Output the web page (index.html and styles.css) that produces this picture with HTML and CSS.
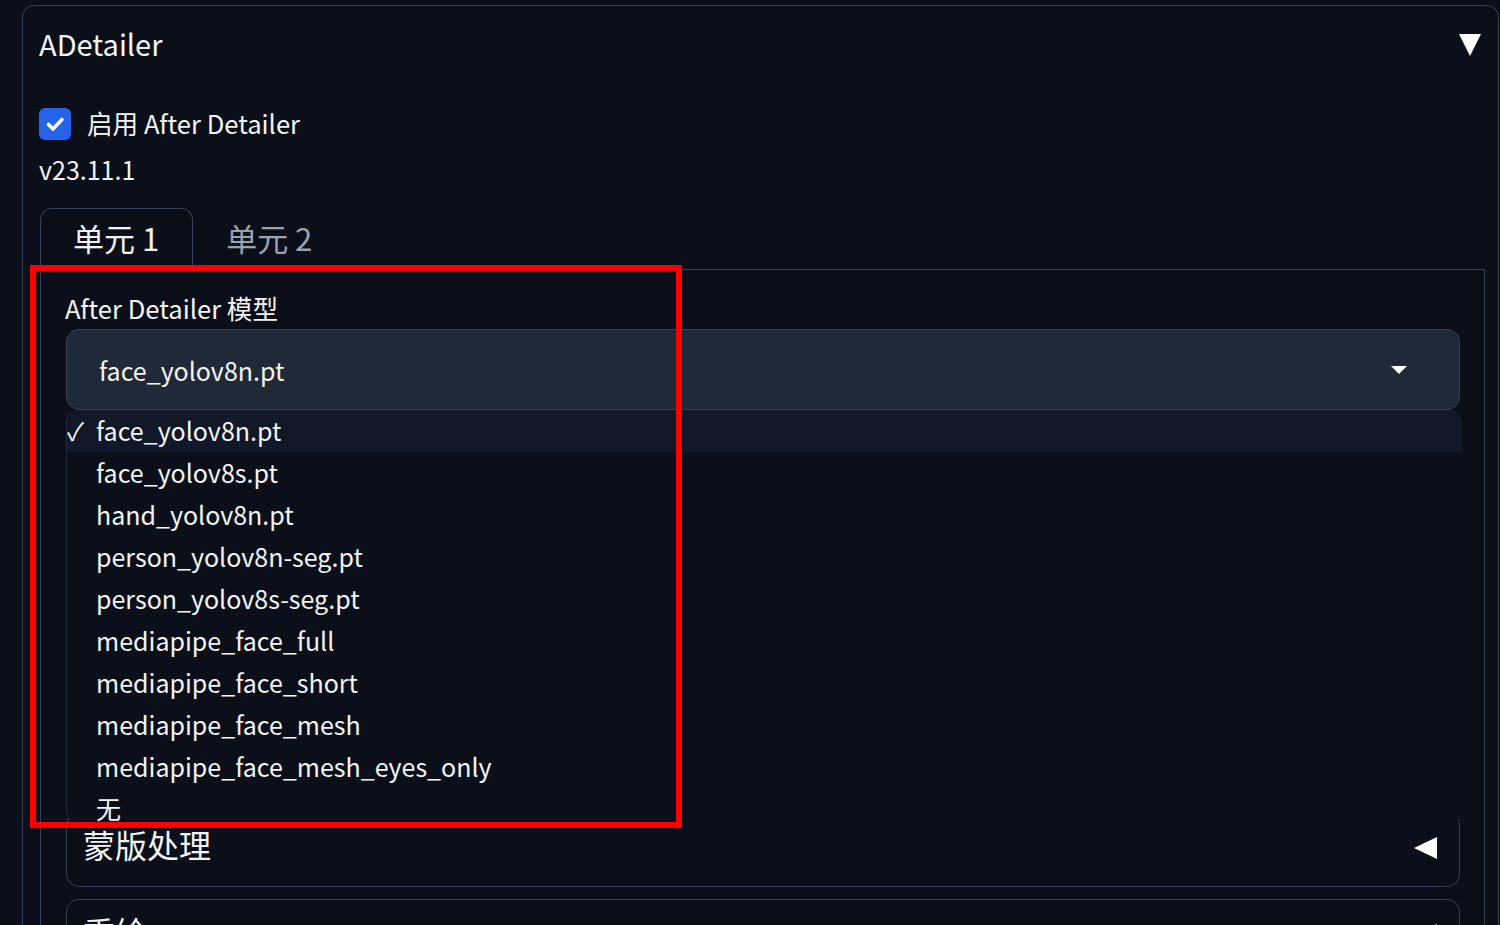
FILE: index.html
```html
<!DOCTYPE html>
<html lang="zh">
<head>
<meta charset="utf-8">
<title>ADetailer</title>
<link rel="stylesheet" href="styles.css">
</head>
<body>
<div class="panel">
  <div class="header">
    <span class="title">ADetailer</span>
    <svg class="tri-down" width="22" height="22" viewBox="0 0 22 22"><polygon points="0,0 22,0 11,22" fill="#ffffff"/></svg>
  </div>
  <label class="check-row">
    <span class="checkbox"><svg width="32" height="32" viewBox="0 0 32 32"><path d="M9.5 16.5 L14 21 L23 11.5" fill="none" stroke="#fff" stroke-width="3.6" stroke-linecap="round" stroke-linejoin="round"/></svg></span>
    <span class="check-label">启用 After Detailer</span>
  </label>
  <div class="version">v23.11.1</div>
  <div class="tabs">
    <div class="tab-nav">
      <div class="tab active">单元 1</div>
      <div class="tab">单元 2</div>
    </div>
    <div class="tab-panel">
      <div class="field-label">After Detailer 模型</div>
      <div class="dropdown">
        <div class="dropdown-input">
          <span class="dropdown-value">face_yolov8n.pt</span>
          <svg class="caret" width="16" height="8" viewBox="0 0 16 8"><polygon points="0,0 16,0 8,8" fill="#ffffff"/></svg>
        </div>
        <ul class="menu">
          <li class="item selected"><span class="tick">✓</span>face_yolov8n.pt</li>
          <li class="item"><span class="tick"></span>face_yolov8s.pt</li>
          <li class="item"><span class="tick"></span>hand_yolov8n.pt</li>
          <li class="item"><span class="tick"></span>person_yolov8n-seg.pt</li>
          <li class="item"><span class="tick"></span>person_yolov8s-seg.pt</li>
          <li class="item"><span class="tick"></span>mediapipe_face_full</li>
          <li class="item"><span class="tick"></span>mediapipe_face_short</li>
          <li class="item"><span class="tick"></span>mediapipe_face_mesh</li>
          <li class="item"><span class="tick"></span>mediapipe_face_mesh_eyes_only</li>
          <li class="item"><span class="tick"></span>无</li>
        </ul>
      </div>
      <div class="hidden-area">
        <div class="textbox"></div>
        <div class="textbox"></div>
        <div class="accordion-closed"></div>
      </div>
      <div class="accordion">
        <span class="acc-title">蒙版处理</span>
        <svg class="tri-left" width="23" height="22" viewBox="0 0 23 22"><polygon points="23,0 23,22 0,11" fill="#ffffff"/></svg>
      </div>
      <div class="accordion">
        <span class="acc-title">重绘</span>
        <svg class="tri-left" width="23" height="22" viewBox="0 0 23 22"><polygon points="23,0 23,22 0,11" fill="#ffffff"/></svg>
      </div>
    </div>
  </div>
</div>
<div class="annot"></div>
</body>
</html>
```

FILE: styles.css
```css
* { box-sizing: border-box; }
html, body {
  margin: 0;
  padding: 0;
  background: #0b0f19;
  color: #f3f4f6;
  font-family: "Noto Sans CJK SC", "Noto Sans", sans-serif;
  overflow: hidden;
  height: 925px;
}
.panel {
  margin: 5px 0 0 22px;
  width: 1477px;
  border: 1px solid #374151;
  border-radius: 12px;
  padding: 0 13px 0 16px;
  height: 1100px;
}
.header {
  height: 78px;
  display: flex;
  align-items: center;
  justify-content: space-between;
  padding-right: 4px;
}
.title {
  font-size: 29px;
  line-height: 36px;
  margin-bottom: 5px;
}
.tri-down { display: block; margin-bottom: 1px; }
.check-row {
  margin-top: 24px;
  display: flex;
  align-items: center;
  gap: 16px;
  height: 32px;
}
.checkbox {
  width: 32px;
  height: 32px;
  border-radius: 6px;
  background: #2563eb;
  display: block;
}
.checkbox svg { display: block; }
.check-label {
  font-size: 25.6px;
  line-height: 32px;
  margin-bottom: 2px;
}
.version {
  margin-top: 14px;
  font-size: 25px;
  line-height: 30px;
}
.tabs {
  margin-top: 24px;
  margin-left: 1px;
}
.tab-nav {
  display: flex;
  height: 61px;
  position: relative;
  z-index: 1;
}
.tab {
  height: 62px;
  padding: 0 33px 5px 32px;
  display: flex;
  align-items: center;
  font-size: 31px;
  color: #9ca3af;
  border: 1px solid transparent;
  border-bottom: none;
  border-radius: 12px 12px 0 0;
}
.tab.active {
  color: #f3f4f6;
  border-color: #374151;
  background: #0b0f19;
}
.tab-panel {
  border: 1px solid #374151;
  padding: 21px 24px 0 25px;
  height: 800px;
}
.field-label {
  font-size: 25.6px;
  line-height: 34px;
  margin-left: -1px;
}
.dropdown {
  position: relative;
  margin-top: 4px;
}
.dropdown-input {
  height: 81px;
  background: #1f2937;
  border: 1px solid #374151;
  border-radius: 13px;
  display: flex;
  align-items: center;
  justify-content: space-between;
  padding: 0 52px 0 32px;
}
.dropdown-value {
  font-size: 25px;
}
.caret { display: block; }
.menu {
  position: absolute;
  top: 100%;
  left: 0;
  width: 1396px;
  height: 412px;
  margin: 0;
  padding: 0;
  list-style: none;
  overflow: hidden;
  background: #0b0f19;
  border-left: 1px solid #1f2937;
  border-radius: 12px;
  z-index: 5;
}
.item {
  height: 42px;
  display: flex;
  align-items: center;
  font-size: 25px;
  color: #f3f4f6;
  padding-bottom: 3px;
}
.item.selected { background: #111827; }
.tick {
  width: 29px;
  flex: none;
  text-align: left;
}
.hidden-area {
  display: flex;
  flex-direction: column;
  gap: 14px;
  padding-top: 30px;
  height: 402px;
}
.textbox {
  height: 120px;
  border: 1px solid #374151;
  border-radius: 12px;
  background: #1f2937;
}
.accordion-closed {
  height: 70px;
  border: 1px solid #374151;
  border-radius: 12px;
}
.accordion {
  height: 75px;
  border: 1px solid #374151;
  border-radius: 13px;
  display: flex;
  align-items: center;
  justify-content: space-between;
  padding: 0 22px 11px 16px;
  margin-bottom: 12px;
}
.acc-title {
  font-size: 32px;
}
.tri-left { display: block; margin-top: 7px; }
.annot {
  position: absolute;
  left: 30px;
  top: 265px;
  width: 652px;
  height: 563px;
  border: 6px solid #ff0000;
  z-index: 10;
}
```
